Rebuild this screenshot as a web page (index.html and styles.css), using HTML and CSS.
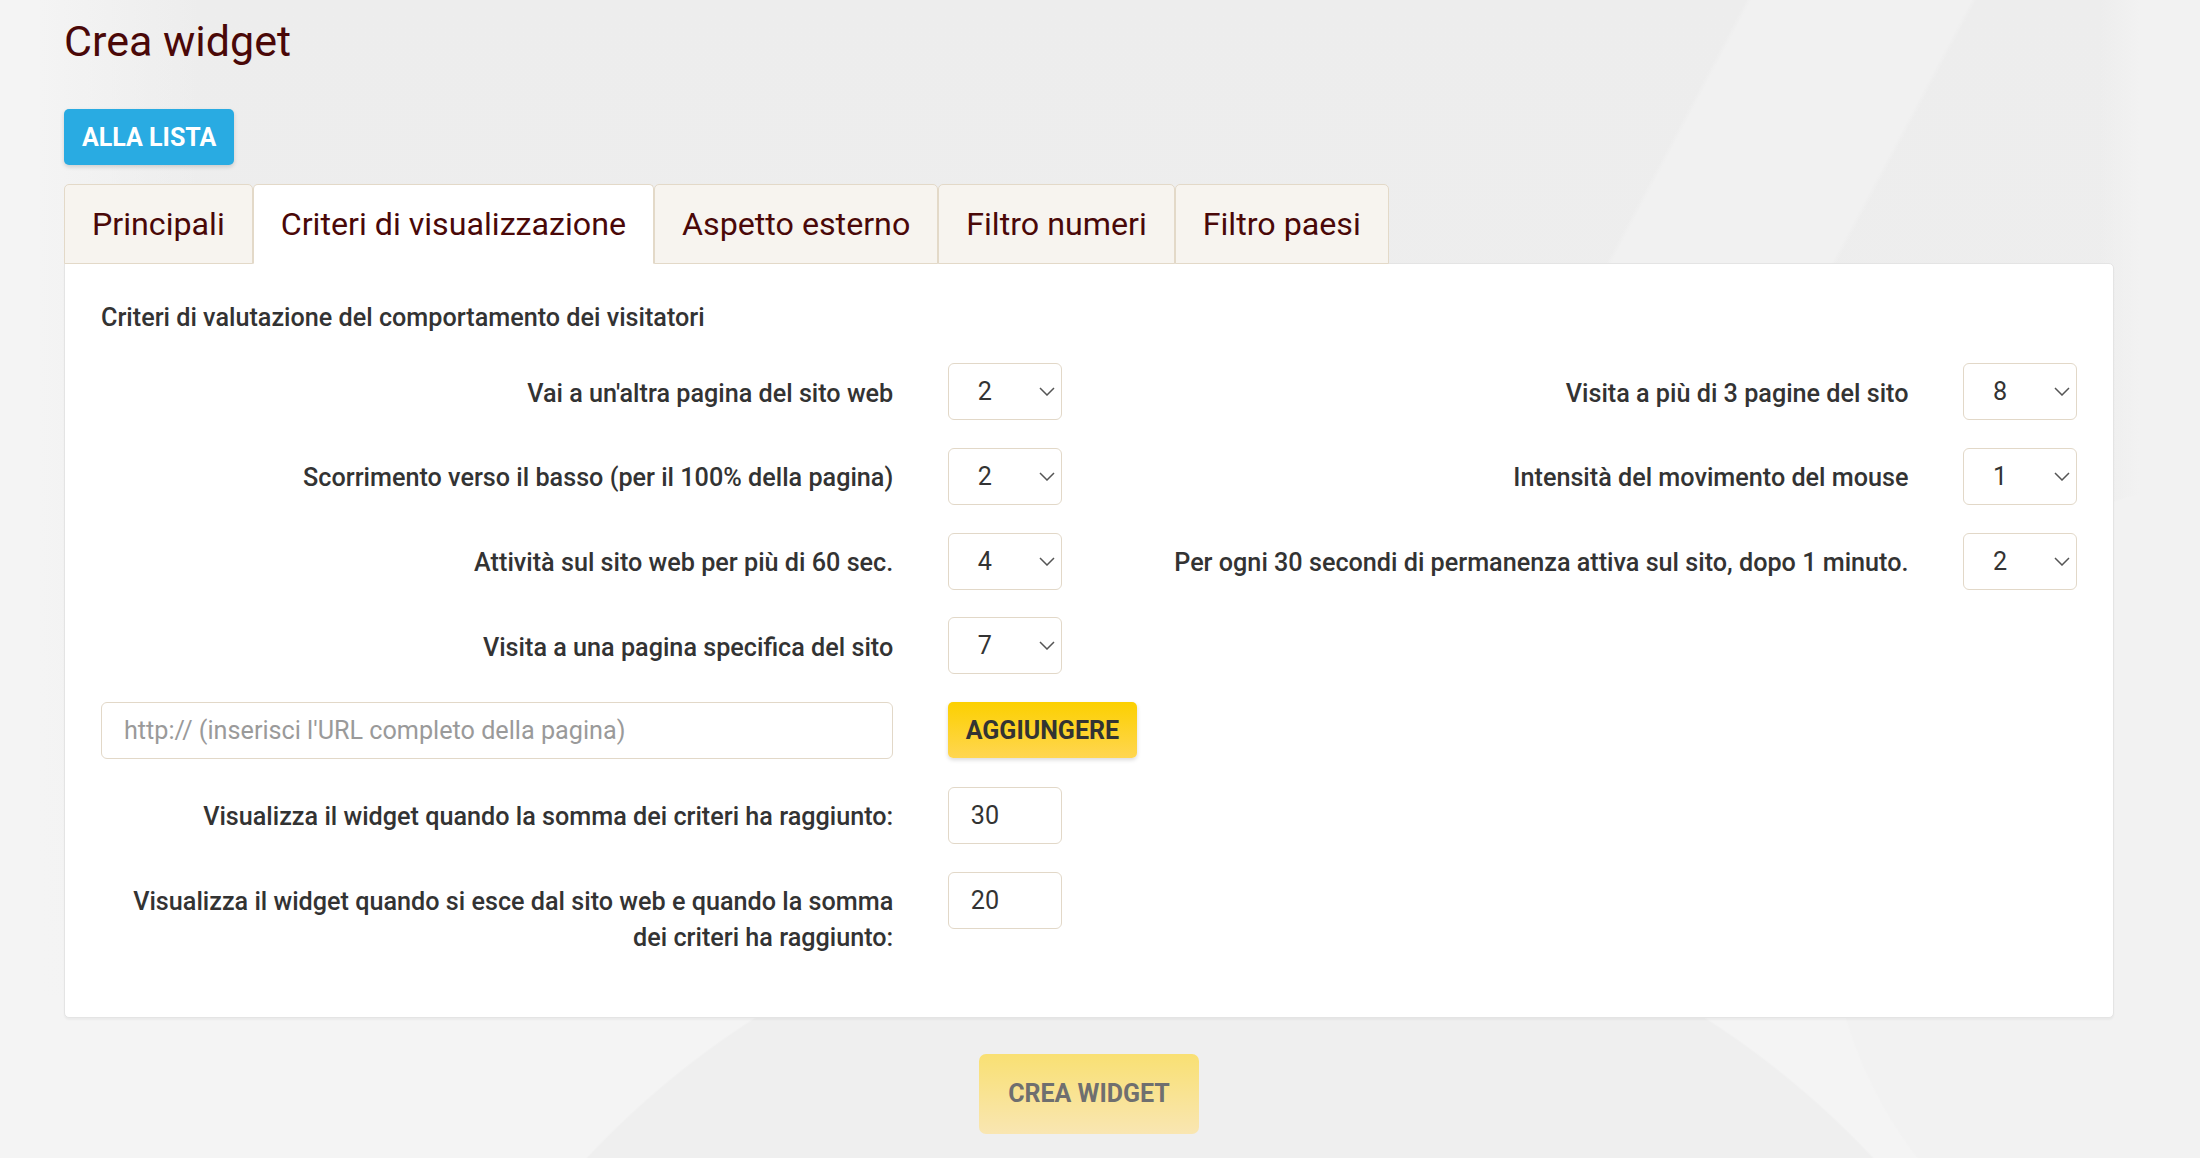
FILE: index.html
```html
<!DOCTYPE html>
<html lang="it">
<head>
<meta charset="utf-8">
<title>Crea widget</title>
<link rel="stylesheet" href="styles.css">
</head>
<body>
<div class="page">
  <h1 class="title">Crea widget</h1>
  <a class="btn btn-blue" href="#">ALLA LISTA</a>

  <nav class="tabs">
    <a class="tab" href="#">Principali</a>
    <a class="tab active" href="#">Criteri di visualizzazione</a>
    <a class="tab" href="#">Aspetto esterno</a>
    <a class="tab" href="#">Filtro numeri</a>
    <a class="tab" href="#">Filtro paesi</a>
  </nav>

  <section class="panel">
    <h2 class="section-title">Criteri di valutazione del comportamento dei visitatori</h2>
    <div class="form-grid">
      <label class="lbl col-1">Vai a un'altra pagina del sito web</label>
      <div class="select col-2"><span>2</span><svg class="chev" width="16" height="9" viewBox="0 0 16 9"><polyline points="1,1 8,8 15,1" fill="none" stroke="#555" stroke-width="1.5"/></svg></div>
      <label class="lbl col-3">Visita a più di 3 pagine del sito</label>
      <div class="select col-4"><span>8</span><svg class="chev" width="16" height="9" viewBox="0 0 16 9"><polyline points="1,1 8,8 15,1" fill="none" stroke="#555" stroke-width="1.5"/></svg></div>

      <label class="lbl col-1">Scorrimento verso il basso (per il 100% della pagina)</label>
      <div class="select col-2"><span>2</span><svg class="chev" width="16" height="9" viewBox="0 0 16 9"><polyline points="1,1 8,8 15,1" fill="none" stroke="#555" stroke-width="1.5"/></svg></div>
      <label class="lbl col-3">Intensità del movimento del mouse</label>
      <div class="select col-4"><span>1</span><svg class="chev" width="16" height="9" viewBox="0 0 16 9"><polyline points="1,1 8,8 15,1" fill="none" stroke="#555" stroke-width="1.5"/></svg></div>

      <label class="lbl col-1">Attività sul sito web per più di 60 sec.</label>
      <div class="select col-2"><span>4</span><svg class="chev" width="16" height="9" viewBox="0 0 16 9"><polyline points="1,1 8,8 15,1" fill="none" stroke="#555" stroke-width="1.5"/></svg></div>
      <label class="lbl col-3">Per ogni 30 secondi di permanenza attiva sul sito, dopo 1 minuto.</label>
      <div class="select col-4"><span>2</span><svg class="chev" width="16" height="9" viewBox="0 0 16 9"><polyline points="1,1 8,8 15,1" fill="none" stroke="#555" stroke-width="1.5"/></svg></div>

      <label class="lbl col-1">Visita a una pagina specifica del sito</label>
      <div class="select col-2"><span>7</span><svg class="chev" width="16" height="9" viewBox="0 0 16 9"><polyline points="1,1 8,8 15,1" fill="none" stroke="#555" stroke-width="1.5"/></svg></div>

      <input class="field col-1" type="text" placeholder="http:// (inserisci l'URL completo della pagina)">
      <button class="btn btn-yellow" type="button">AGGIUNGERE</button>

      <label class="lbl col-1">Visualizza il widget quando la somma dei criteri ha raggiunto:</label>
      <input class="field num col-2" type="text" value="30">

      <label class="lbl col-1">Visualizza il widget quando si esce dal sito web e quando la somma dei criteri ha raggiunto:</label>
      <input class="field num col-2" type="text" value="20">
    </div>
  </section>

  <div class="actions">
    <button class="btn btn-create" type="button">CREA WIDGET</button>
  </div>
</div>
</body>
</html>
```

FILE: styles.css
```css
html, body {
  margin: 0;
  padding: 0;
}
body {
  font-family: Roboto, "Liberation Sans", Arial, sans-serif;
  color: #333;
  min-height: 1158px;
  overflow: hidden;
  background-color: #efefef;
  background-image:
    radial-gradient(circle at 1230px 1760px, #efefef 880px, rgba(239,239,239,0) 882px),
    radial-gradient(circle at 2250px 900px, #f2f2f2 420px, rgba(242,242,242,0) 422px),
    linear-gradient(90deg, rgba(242,242,242,0) 2100px, #f2f2f2 2140px),
    linear-gradient(118deg, rgba(241,241,241,0) 62%, #f1f1f1 62.2%, #f1f1f1 70%, rgba(241,241,241,0) 70.2%),
    linear-gradient(90deg, #f4f4f4 0, #f4f4f4 40px, rgba(244,244,244,0) 200px),
    linear-gradient(180deg, #ededed 0, #eeeeee 600px, #f4f4f4 1000px);
}

.page {
  width: 2050px;
  margin-left: 64px;
  padding-top: 16px;
}

.title {
  margin: 0 0 43px;
  font-size: 43px;
  line-height: 50px;
  font-weight: 400;
  color: #4a0808;
}

.btn {
  font-family: Roboto, "Liberation Sans", Arial, sans-serif;
  font-weight: 700;
  font-size: 25px;
  border: none;
  border-radius: 5px;
  text-decoration: none;
  display: inline-flex;
  align-items: center;
  justify-content: center;
  cursor: pointer;
  box-sizing: border-box;
}

.btn-blue {
  height: 56px;
  padding: 0 18px;
  background: #29abe2;
  color: #fff;
  box-shadow: 0 2px 4px rgba(0, 0, 0, 0.15);
}

.tabs {
  display: flex;
  margin-top: 19px;
  position: relative;
  z-index: 1;
}

.tab {
  box-sizing: border-box;
  height: 80px;
  padding: 15px 27px;
  font-size: 32.2px;
  line-height: 48px;
  color: #4a0808;
  text-decoration: none;
  background: #f7f4ef;
  border: 1px solid #e3d9c8;
  border-radius: 5px 5px 0 0;
}

.tab.active {
  background: #fff;
  border-bottom-color: #fff;
}

.panel {
  margin-top: -1px;
  background: #fff;
  border: 1px solid #e4e4e4;
  border-radius: 0 5px 5px 5px;
  padding: 36px 36px 60px;
  box-shadow: 0 2px 2px rgba(0, 0, 0, 0.04);
}

.section-title {
  margin: 0 0 27px;
  font-size: 25.2px;
  line-height: 36px;
  font-weight: 500;
  color: #333;
}

.form-grid {
  display: grid;
  grid-template-columns: 1fr 114px 1fr 114px;
  column-gap: 54.5px;
  row-gap: 27.75px;
  align-items: start;
}

.col-1 { grid-column: 1; }
.col-2 { grid-column: 2; }
.col-3 { grid-column: 3; }
.col-4 { grid-column: 4; }

.lbl {
  text-align: right;
  font-size: 25.2px;
  line-height: 36.4px;
  font-weight: 500;
  color: #333;
  padding-top: 12.5px;
}

.select {
  box-sizing: border-box;
  height: 57px;
  border: 1px solid #e2d8c8;
  border-radius: 6px;
  background: #fff;
  display: flex;
  align-items: center;
  justify-content: space-between;
  padding: 0 6px 0 29px;
  font-size: 25.2px;
  color: #333;
}

.chev {
  display: block;
}

.field {
  box-sizing: border-box;
  height: 57px;
  border: 1px solid #e2d8c8;
  border-radius: 6px;
  background: #fff;
  padding: 0 22px;
  font-family: Roboto, "Liberation Sans", Arial, sans-serif;
  font-size: 25.2px;
  color: #333;
  outline: none;
  width: 100%;
}

.field::placeholder {
  color: #9a9a9a;
}

.btn-yellow {
  grid-column: 2 / 4;
  justify-self: start;
  height: 56px;
  padding: 0 18px;
  color: #333;
  background: linear-gradient(180deg, #fcd000 0%, #ffd651 100%);
  box-shadow: 0 2px 4px rgba(0, 0, 0, 0.15);
}

.actions {
  display: flex;
  justify-content: center;
  margin-top: 36px;
}

.btn-create {
  height: 80px;
  padding: 0 29px;
  border-radius: 7px;
  color: #6f6f6f;
  background: linear-gradient(180deg, #f9e073 0%, #f9e6b2 100%);
}
```
